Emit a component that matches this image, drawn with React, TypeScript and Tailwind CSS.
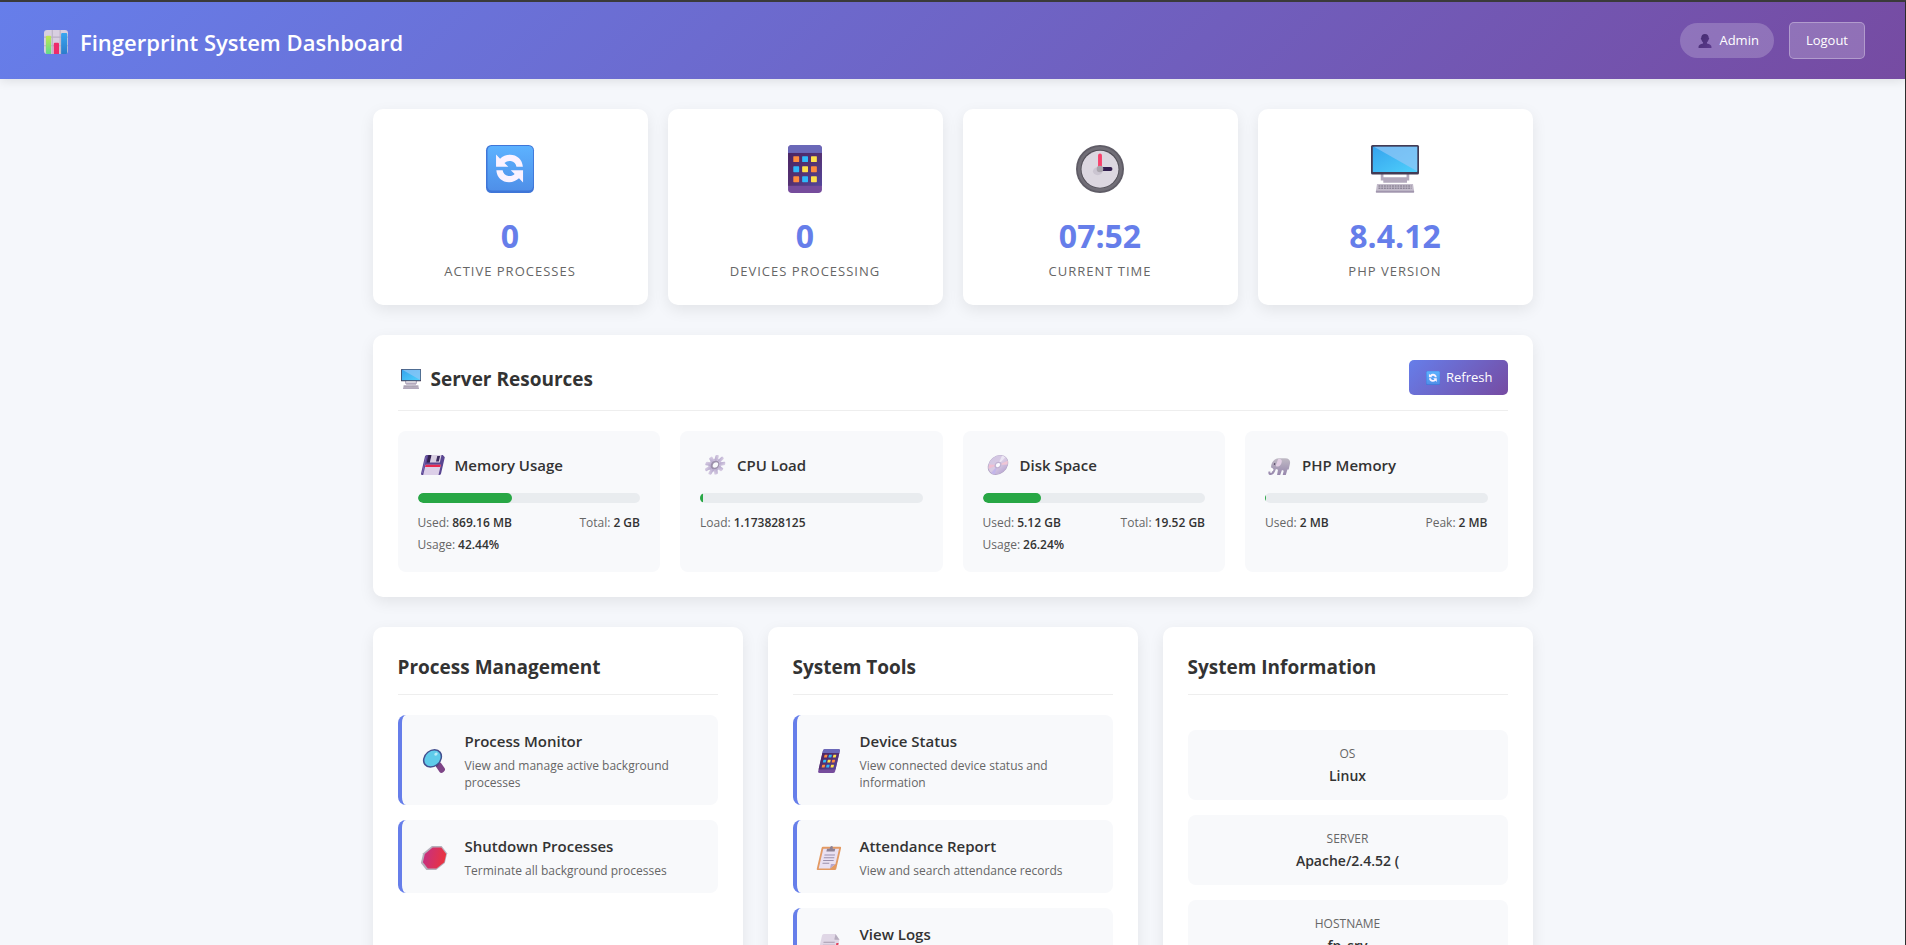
import type { ReactNode } from "react";

type IconProps = { className?: string };

function Glyph({ className, slanted, children }: IconProps & { slanted?: boolean; children: ReactNode }) {
  return (
    <svg viewBox="0 0 32 32" aria-hidden="true" className={className} overflow="visible">
      {slanted ? <g transform="translate(16 16) skewX(-13) translate(-16 -16)">{children}</g> : children}
    </svg>
  );
}

function ChartIcon({ className }: IconProps) {
  return (
    <Glyph className={className}>
      <defs>
        <linearGradient id="chartGreen" x1="0" y1="0" x2="0" y2="1">
          <stop offset="0" stopColor="#c2e650" />
          <stop offset="1" stopColor="#5edb8e" />
        </linearGradient>
        <linearGradient id="chartBlue" x1="0" y1="0" x2="0" y2="1">
          <stop offset="0" stopColor="#38a6f0" />
          <stop offset="1" stopColor="#2c7ccb" />
        </linearGradient>
      </defs>
      <rect width="32" height="32" rx="4" fill="#d8cfe0" />
      <path d="M0 9.5h32M0 21h32M11 0v32M21.5 0v32" stroke="#b9b0c4" strokeWidth="1.4" />
      <path d="M2.500 9.300a1.500 1.500 0 0 1 1.500-1.500h4A1.500 1.500 0 0 1 9.500 9.300V32H4a1.500 1.500 0 0 1-1.500-1.500z" fill="url(#chartGreen)" />
      <path d="M13 18.500a1.500 1.500 0 0 1 1.500-1.500h4a1.500 1.500 0 0 1 1.500 1.500V32h-7z" fill="#ed2b6b" />
      <path d="M22.800 5.500A1.500 1.500 0 0 1 24.300 4h5.200A1.500 1.500 0 0 1 31 5.500V31l-1 1h-7.200z" fill="url(#chartBlue)" />
    </Glyph>
  );
}

function UserIcon({ className }: IconProps) {
  return (
    <Glyph className={className}>
      <defs>
        <linearGradient id="userFill" x1="0" y1="0" x2="1" y2="1">
          <stop offset="0" stopColor="#432c6e" />
          <stop offset="1" stopColor="#5c3a8e" />
        </linearGradient>
      </defs>
      <path
        d="M16 0c5.500 0 8.500 3.500 8.500 8.500 1.500.5 1.500 4-.5 4.500-.8 3-2 4.800-3.500 6v2.500c6 1.500 10.500 3.500 10.500 8.500 0 1.300-.7 2-2 2H3c-1.300 0-2-.7-2-2 0-5 4.500-7 10.500-8.500V19C10 17.800 8.800 16 8 13c-2-.5-2-4-.5-4.500C7.500 3.500 10.500 0 16 0z"
        fill="url(#userFill)"
      />
    </Glyph>
  );
}

function RefreshIcon({ className }: IconProps) {
  return (
    <Glyph className={className}>
      <defs>
        <linearGradient id="refreshFill" x1="0" y1="0" x2="0" y2="1">
          <stop offset="0" stopColor="#5cb2ff" />
          <stop offset="1" stopColor="#4f8fe8" />
        </linearGradient>
      </defs>
      <rect width="32" height="32" rx="3.500" fill="#3f76d8" />
      <rect x="1" y=".6" width="30.400" height="29.800" rx="3" fill="url(#refreshFill)" />
      <path
        d="M6.700 6.300v8.200h8.200l-2.600-2.500c1.300-1.200 2.700-1.600 4.200-1.300 2.300.4 3.500 2 3.800 3.800h4.300C24.200 9.700 20.700 6.500 16 6.500c-2.700 0-4.900 1-6.600 2.600z"
        fill="#fbf2ff"
      />
      <path
        d="M24.700 25v-8.200h-8.200l2.600 2.500c-1.300 1.200-2.700 1.600-4.200 1.300-2.300-.4-3.500-2-3.800-3.800H6.900c.3 4.800 3.800 8 8.500 8 2.700 0 4.900-1 6.600-2.600z"
        fill="#fbf2ff"
      />
    </Glyph>
  );
}

const keypad = [
  ["#ff8b3d", "#2fb8fa", "#ffe04a"],
  ["#2fb8fa", "#ffe04a", "#ff8b3d"],
  ["#ff8b3d", "#2fb8fa", "#ffe04a"],
];

function PhoneIcon({ className, slanted }: IconProps & { slanted?: boolean }) {
  return (
    <Glyph className={className} slanted={slanted}>
      <defs>
        <linearGradient id="phoneScreen" x1="0" y1="0" x2="1" y2="1">
          <stop offset="0" stopColor="#4a2565" />
          <stop offset=".5" stopColor="#543172" />
          <stop offset="1" stopColor="#53469a" />
        </linearGradient>
      </defs>
      <rect x="4.700" width="22.600" height="32" rx="2.500" fill="#764c9c" />
      <path d="M4.700 2.500A2.500 2.500 0 0 1 7.200 0h17.600a2.500 2.500 0 0 1 2.500 2.500V6H4.700z" fill="#6a68b8" />
      <rect x="4.700" y="5.300" width="22.600" height="21.900" fill="url(#phoneScreen)" />
      {keypad.map((row, r) =>
        row.map((color, c) => (
          <rect key={`${r}-${c}`} x={8.2 + c * 5.9} y={7.5 + r * 6.7} width="3.900" height="3.900" rx=".4" fill={color} />
        )),
      )}
    </Glyph>
  );
}

function ClockIcon({ className }: IconProps) {
  return (
    <Glyph className={className}>
      <circle cx="16" cy="16" r="16" fill="#5f5c66" />
      <circle cx="16" cy="16" r="14.800" fill="#716e77" />
      <circle cx="16" cy="16" r="12.900" fill="#4f4c55" />
      <circle cx="16" cy="16.200" r="12.300" fill="#dcd7e0" />
      <ellipse cx="14.500" cy="17.500" rx="3.200" ry="2.600" fill="#cbc5d1" />
      <path d="M16 7v9" stroke="#f7406a" strokeWidth="2.600" strokeLinecap="round" />
      <path d="M16 16h7" stroke="#321e4e" strokeWidth="2.600" strokeLinecap="round" />
      <circle cx="16" cy="16" r="2.200" fill="#a9a4ac" />
    </Glyph>
  );
}

function DesktopIcon({ className }: IconProps) {
  return (
    <Glyph className={className}>
      <defs>
        <linearGradient id="desktopScreen" x1="0" y1="0" x2="1" y2="1">
          <stop offset="0" stopColor="#35a3ee" />
          <stop offset="1" stopColor="#4fd0fb" />
        </linearGradient>
      </defs>
      <path d="M6.500 19h1.800v2.500h15.400V19h1.800v4.700H24v1.500H8.200v-1.500H6.500z" fill="#b3a9bd" />
      <rect width="32" height="19.700" rx="1" fill="#433b55" />
      <rect x="1.200" y="1.200" width="29.600" height="16.800" fill="url(#desktopScreen)" />
      <path d="M2 1.200h28.800v16.300z" fill="#8ec6f6" opacity=".75" />
      <path d="M4 26h24l.8 5.200a.7.700 0 0 1-.7.800H3.900a.7.700 0 0 1-.7-.8z" fill="#c4bccb" />
      <path d="M5 27.300h22M5 28.800h22" stroke="#8d8698" strokeWidth="1" strokeDasharray="1.300 .5" />
      <path d="M3.300 31h25.400" stroke="#a196ae" strokeWidth="1" />
    </Glyph>
  );
}

function FloppyIcon({ className }: IconProps) {
  return (
    <Glyph className={className} slanted>
      <path d="M2.500 0H28l4 3.500v26a2.500 2.500 0 0 1-2.500 2.500h-27A2.500 2.500 0 0 1 0 29.500v-27A2.500 2.500 0 0 1 2.500 0z" fill="#5a4691" />
      <path d="M2 2v27" stroke="#7a67b4" strokeWidth="1.500" />
      <path d="M5 0h5v12H5z" fill="#32214f" />
      <path d="M10 0h16v12H10z" fill="#d9cfe2" />
      <path d="M19.500 1.500h4.500v9h-4.500z" fill="#3b2a5c" />
      <path d="M4 15.500h24.500V32H4z" fill="#dccfe8" />
      <path d="M4 15.500h24.500v3.800H4z" fill="#e8294f" />
    </Glyph>
  );
}

function GearIcon({ className }: IconProps) {
  return (
    <Glyph className={className} slanted>
      <defs>
        <linearGradient id="gearFill" x1="0" y1="1" x2="1" y2="0">
          <stop offset="0" stopColor="#b3a5cb" />
          <stop offset="1" stopColor="#dcd2e6" />
        </linearGradient>
      </defs>
      <circle cx="16" cy="16" r="10.300" fill="url(#gearFill)" />
      {[0, 40, 80, 120, 160, 200, 240, 280, 320].map((angle) => (
        <rect key={angle} x="13.200" y="0" width="5.600" height="9" rx="1.800" fill="url(#gearFill)" transform={`rotate(${angle} 16 16)`} />
      ))}
      <circle cx="16" cy="16" r="6.800" fill="#9c90ab" />
      <circle cx="16.700" cy="16" r="4.300" fill="#f8f9fb" />
    </Glyph>
  );
}

function DiscIcon({ className }: IconProps) {
  return (
    <Glyph className={className} slanted>
      <defs>
        <linearGradient id="discFill" x1="0" y1="0" x2="1" y2="1">
          <stop offset="0" stopColor="#cfc4e2" />
          <stop offset=".5" stopColor="#d9cbe4" />
          <stop offset="1" stopColor="#b3a0cf" />
        </linearGradient>
      </defs>
      <circle cx="16" cy="16" r="16" fill="#b0a2c2" />
      <circle cx="16" cy="15.600" r="15.200" fill="url(#discFill)" />
      <path d="M16 16 1.500 15l.7 7z" fill="#efbfd2" />
      <path d="m16 16 14-7 1 6z" fill="#f0c6d6" />
      <path d="M16 16 19 .8l6 2.700z" fill="#ece6f4" />
      <path d="m16 16-8 13 6 2z" fill="#c3b5ea" />
      <circle cx="16" cy="16" r="5.400" fill="#c0b2d2" />
      <circle cx="16" cy="16" r="3.400" fill="#fbfaff" />
    </Glyph>
  );
}

function ElephantIcon({ className }: IconProps) {
  return (
    <Glyph className={className} slanted>
      <defs>
        <linearGradient id="elephantBody" x1="0" y1="0" x2="0" y2="1">
          <stop offset="0" stopColor="#c0bbc5" />
          <stop offset="1" stopColor="#9787ad" />
        </linearGradient>
      </defs>
      <path
        d="M12 5h10c6 0 9.500 4 9.500 9.500V23h-2l-.5 9h-5v-7l-3-1-1 8h-5l-.5-8.500-3.500-1c-.5 6-2.500 9.500-6 9.500C1.500 32 0 29.500 0 26.500h3c0 1.500.5 2.300 1.500 2.300 1.300 0 1.500-2 1-5.300C2 21 1.500 17 2.500 12.500 3.500 8 7 5 12 5z"
        fill="url(#elephantBody)"
      />
      <path d="M11 6c5 0 7.500 2.500 6.500 7.500-.7 3.500-3 5-5.500 5-2 0-2.500-1.500-2.500-3.500z" fill="#e2cfe4" />
      <path d="M2.500 20.500c2 0 3.500 1 5 3l-1 2.500C4.500 26 3 24 2.500 20.500z" fill="#fff" />
      <circle cx="7" cy="14.500" r="1.200" fill="#3a2a4c" />
    </Glyph>
  );
}

function MagnifierIcon({ className }: IconProps) {
  return (
    <Glyph className={className} slanted>
      <path d="m23.500 21.500 6 6.500" stroke="#7d4486" strokeWidth="7.500" strokeLinecap="round" />
      <path d="m18.500 19 4 3.500" stroke="#5a3f78" strokeWidth="4" />
      <circle cx="13.200" cy="12.500" r="11.500" fill="#5fcbea" stroke="#44508f" strokeWidth="2" />
      <circle cx="16.500" cy="6.800" r="2.200" fill="#b8ebf8" />
    </Glyph>
  );
}

function StopIcon({ className }: IconProps) {
  return (
    <Glyph className={className} slanted>
      <defs>
        <linearGradient id="stopFill" x1="0" y1="0" x2="1" y2="0">
          <stop offset="0" stopColor="#c8307e" />
          <stop offset="1" stopColor="#ea3440" />
        </linearGradient>
      </defs>
      <path d="M9.500 0h13l9.500 9.500v13L22.500 32h-13L0 22.500v-13z" fill="#b5b0bb" />
      <path d="M11 2h11.500L31 10.500v11L22.500 30H11l-8.500-8.500v-11z" fill="url(#stopFill)" />
    </Glyph>
  );
}

function ClipboardIcon({ className }: IconProps) {
  return (
    <Glyph className={className} slanted>
      <rect x="3" y="1" width="26" height="31" rx="1.500" fill="#e39a63" />
      <path d="M5.500 3.500h21V24l-6 6h-15z" fill="#e9e0f2" />
      <path d="M20.500 30v-6h6z" fill="#b7a6cc" />
      <path d="M9 12h14M9 15.700h14M9 19.400h14M9 23h9" stroke="#9b90ad" strokeWidth="1.300" />
      <path d="M10.500 3.500H14C14 1.500 14.500 0 16 0s2 1.500 2 3.500h3.500v3.800h-11z" fill="#8c8194" />
    </Glyph>
  );
}

function PageIcon({ className }: IconProps) {
  return (
    <Glyph className={className} slanted>
      <path d="M5.500 0H21l7 7.500V30a2 2 0 0 1-2 2H5.500a2 2 0 0 1-2-2V2a2 2 0 0 1 2-2z" fill="#e0d7e6" />
      <path d="M21 0v6.500a1 1 0 0 0 1 1h6z" fill="#b7aebf" />
      <path d="M7.500 11h15M7.500 15h16M7.500 19h16" stroke="#a79caf" strokeWidth="1.400" />
      <path d="M25 12h3v3h-3z" fill="#e3425c" />
    </Glyph>
  );
}

const stats = [
  { Icon: RefreshIcon, value: "0", label: "Active Processes" },
  { Icon: PhoneIcon, value: "0", label: "Devices Processing" },
  { Icon: ClockIcon, value: "07:52", label: "Current Time" },
  { Icon: DesktopIcon, value: "8.4.12", label: "PHP Version" },
];

const resources = [
  { Icon: FloppyIcon, title: "Memory Usage", percent: 42.44, details: [["Used", "869.16 MB"], ["Total", "2 GB"], ["Usage", "42.44%"]] },
  { Icon: GearIcon, title: "CPU Load", percent: 1.17, details: [["Load", "1.173828125"]] },
  { Icon: DiscIcon, title: "Disk Space", percent: 26.24, details: [["Used", "5.12 GB"], ["Total", "19.52 GB"], ["Usage", "26.24%"]] },
  { Icon: ElephantIcon, title: "PHP Memory", percent: 0.4, details: [["Used", "2 MB"], ["Peak", "2 MB"]] },
];

const processLinks = [
  { Icon: MagnifierIcon, title: "Process Monitor", text: "View and manage active background processes" },
  { Icon: StopIcon, title: "Shutdown Processes", text: "Terminate all background processes" },
];

const toolLinks = [
  { Icon: PhoneIcon, title: "Device Status", text: "View connected device status and information" },
  { Icon: ClipboardIcon, title: "Attendance Report", text: "View and search attendance records" },
  { Icon: PageIcon, title: "View Logs", text: "View system log files" },
];

const systemInfo = [
  ["OS", "Linux"],
  ["Server", "Apache/2.4.52 ("],
  ["Hostname", "fp_srv"],
];

function Panel({ title, children }: { title: string; children: ReactNode }) {
  return (
    <section className="rounded-[10px] bg-white p-[25px] shadow-[0_5px_15px_rgba(0,0,0,0.08)]">
      <h2 className="mb-5 border-b border-[#eeeeee] pb-3 text-[19px] leading-[30px] font-bold">{title}</h2>
      {children}
    </section>
  );
}

function LinkList({ links }: { links: typeof toolLinks }) {
  return (
    <ul className="flex flex-col gap-[15px]">
      {links.map(({ Icon, title, text }) => (
        <li key={title}>
          <a href="#" className="flex items-center gap-[17px] rounded-lg border-l-4 border-[#667eea] bg-[#f8f9fb] pt-4 pr-5 pb-3.5 pl-[18px]">
            <span className="flex w-7 shrink-0 justify-center">
              <Icon className="size-6" slanted />
            </span>
            <span className="block">
              <span className="mb-[5px] block text-[15px] leading-[21px] font-semibold">{title}</span>
              <span className="block text-xs leading-[17px] text-[#666666]">{text}</span>
            </span>
          </a>
        </li>
      ))}
    </ul>
  );
}

export default function App() {
  return (
    <div className="min-h-screen border-t-2 border-r border-t-[#3c3c3c] border-r-[#2e2e2e] bg-[#f5f7fb] font-['Open_Sans','Noto_Sans',sans-serif] text-[#333333]">
      <header className="flex h-[77px] items-center justify-between bg-[linear-gradient(135deg,#667eea_0%,#764ba2_100%)] pr-10 pl-11 text-white shadow-[0_2px_10px_rgba(0,0,0,0.1)]">
        <h1 className="flex items-center gap-3 pt-[3px] text-[22px] font-semibold">
          <ChartIcon className="size-6" />
          Fingerprint System Dashboard
        </h1>
        <div className="flex items-center gap-[15px]">
          <div className="flex h-[35px] items-center gap-[7px] rounded-full bg-white/20 pr-[15px] pl-[18px] text-[13px]">
            <UserIcon className="size-3.5" />
            Admin
          </div>
          <button type="button" className="h-[37px] rounded-[5px] border border-white/30 bg-white/20 px-4 text-[13px]">
            Logout
          </button>
        </div>
      </header>

      <main className="mx-auto flex max-w-[1200px] flex-col gap-[30px] px-5 py-[30px]">
        <section className="grid grid-cols-4 gap-5">
          {stats.map(({ Icon, value, label }) => (
            <div key={label} className="flex flex-col items-center rounded-[10px] bg-white px-5 pt-9 pb-[21px] shadow-[0_5px_15px_rgba(0,0,0,0.08)]">
              <Icon className="size-12" />
              <div className="mt-5 text-[32px] leading-[45px] font-bold text-[#667eea]">{value}</div>
              <div className="text-[13px] leading-[26px] tracking-[1px] text-[#666666] uppercase">{label}</div>
            </div>
          ))}
        </section>

        <section className="rounded-[10px] bg-white p-[25px] shadow-[0_5px_15px_rgba(0,0,0,0.08)]">
          <div className="mb-5 flex items-center justify-between border-b border-[#eeeeee] pb-[15px]">
            <h2 className="flex items-center gap-2.5 pt-[3px] pl-[3px] text-[19px] leading-[30px] font-bold">
              <DesktopIcon className="size-5" />
              Server Resources
            </h2>
            <button
              type="button"
              className="flex h-[35px] items-center gap-1.5 rounded-[5px] bg-[linear-gradient(135deg,#667eea_0%,#764ba2_100%)] pr-[15px] pl-[17px] text-[13px] text-white"
            >
              <RefreshIcon className="size-3.5" />
              Refresh
            </button>
          </div>
          <div className="grid grid-cols-4 gap-5">
            {resources.map(({ Icon, title, percent, details }) => (
              <div key={title} className="rounded-lg bg-[#f8f9fb] px-5 pt-5 pb-[19px]">
                <h3 className="mb-3.5 flex h-7 items-center gap-2.5 pl-[3px] text-[15px] font-semibold">
                  <span className="flex w-6 justify-center">
                    <Icon className="size-5" />
                  </span>
                  {title}
                </h3>
                <div className="mb-[11px] h-2.5 overflow-hidden rounded-full bg-[#e9ecef]">
                  <div className="h-full rounded-full bg-[#28a745]" style={{ width: `${percent}%` }} />
                </div>
                <dl className="flex flex-wrap justify-between gap-y-[5px] text-xs leading-[17px]">
                  {details.map(([name, amount]) => (
                    <div key={name} className="flex gap-[3px]">
                      <dt className="text-[#666666]">{name}:</dt>
                      <dd className="font-semibold">{amount}</dd>
                    </div>
                  ))}
                </dl>
              </div>
            ))}
          </div>
        </section>

        <div className="grid grid-cols-3 gap-[25px]">
          <Panel title="Process Management">
            <LinkList links={processLinks} />
          </Panel>
          <Panel title="System Tools">
            <LinkList links={toolLinks} />
          </Panel>
          <Panel title="System Information">
            <dl className="flex flex-col gap-[15px] pt-[15px]">
              {systemInfo.map(([name, value]) => (
                <div key={name} className="rounded-lg bg-[#f8f9fb] p-[15px] text-center">
                  <dt className="mb-[5px] text-xs leading-[17px] text-[#666666] uppercase">{name}</dt>
                  <dd className="text-sm leading-[18px] font-semibold">{value}</dd>
                </div>
              ))}
            </dl>
          </Panel>
        </div>
      </main>
    </div>
  );
}
